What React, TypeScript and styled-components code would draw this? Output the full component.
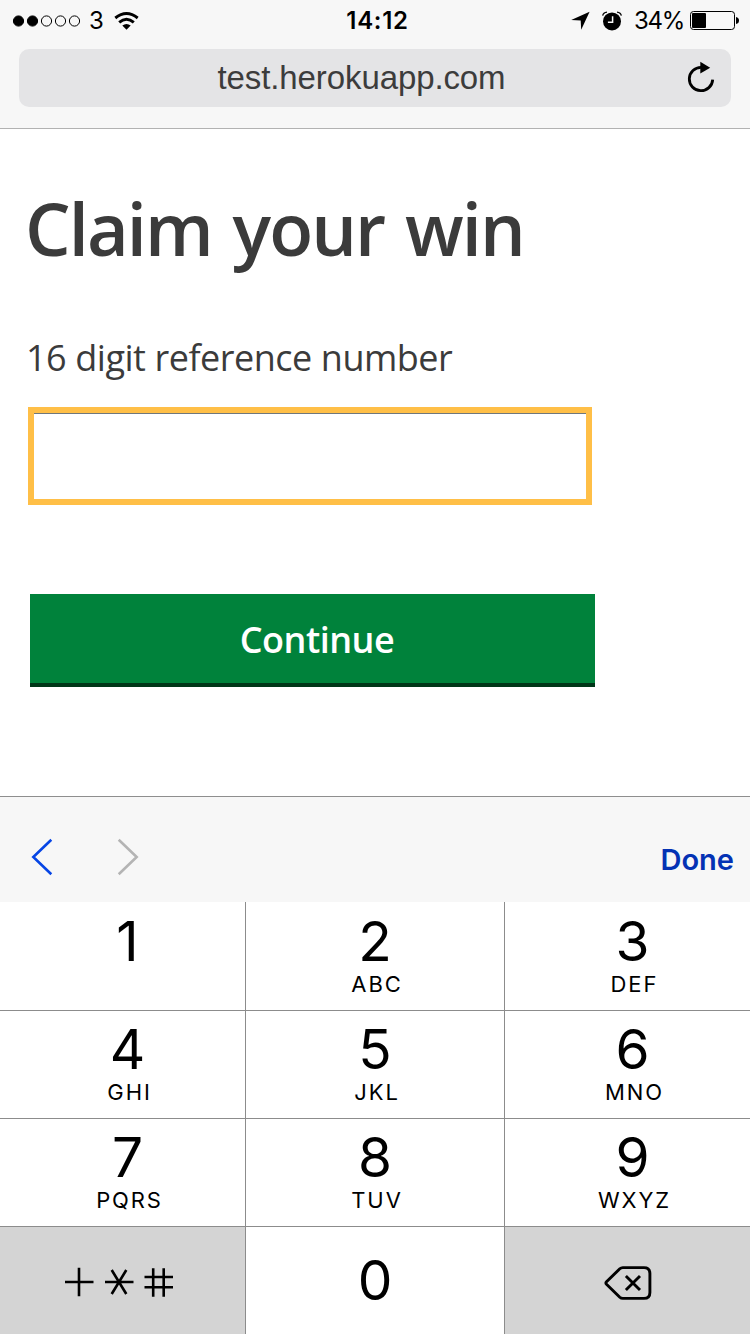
import React from "react";
import styled, { createGlobalStyle } from "styled-components";

const GlobalStyle = createGlobalStyle`
  *, *::before, *::after { box-sizing: border-box; }
  body { margin: 0; background: #fff; }
  button, input { font: inherit; border: 0; padding: 0; margin: 0; border-radius: 0; background: none; outline: none; }
`;

const Screen = styled.div`
  display: flex;
  flex-direction: column;
  width: 750px;
  height: 1334px;
  overflow: hidden;
  background: #fff;
  color: #000;
  font-family: Inter, "Liberation Sans", sans-serif;
`;

const BrowserHeader = styled.header`
  height: 129px;
  padding: 0 19px;
  background: #f7f7f7;
  border-bottom: 1px solid #b2b2b2;
`;

const StatusBar = styled.div`
  display: grid;
  grid-template-columns: 1fr auto 1fr;
  align-items: center;
  height: 42px;
  margin: 0 -19px 7px;
  padding: 0 11px 0 12px;
  font-size: 24px;
  line-height: 40px;
`;

const StatusGroup = styled.div<{ $end?: boolean }>`
  display: flex;
  align-items: center;
  justify-content: ${(p) => (p.$end ? "flex-end" : "flex-start")};
  svg { display: block; flex: none; margin-bottom: 1px; }
`;

const Carrier = styled.span`
  margin: 0 10px 0 8px;
`;

const Clock = styled.span`
  padding-left: 4px;
  font-weight: 600;
  font-size: 24px;
  letter-spacing: 0.7px;
`;

const BatteryLevel = styled.span`
  margin: 0 6px 0 12px;
  letter-spacing: -1.3px;
`;

const AlarmSlot = styled.span`
  margin-left: 12px;
`;

const AddressBar = styled.div`
  display: flex;
  align-items: center;
  height: 58px;
  border-radius: 10px;
  background: #e4e4e6;
`;

const Address = styled.span`
  flex: 1;
  padding-left: 17px;
  text-align: center;
  color: #3c3c3c;
  font: 33px/58px "Liberation Sans", Arial, sans-serif;
  letter-spacing: -0.1px;
`;

const ReloadButton = styled.button`
  width: 28px;
  height: 32px;
  margin: 0 16px 2px 0;
  svg { display: block; }
`;

const Page = styled.main`
  display: flex;
  flex-direction: column;
  align-items: flex-start;
  height: 667px;
  padding: 50px 28px 0 26px;
  color: #3b3b3b;
  font-family: "Open Sans", "Noto Sans", sans-serif;
`;

const Title = styled.h1`
  margin: 0 0 0 -1px;
  font-size: 72px;
  line-height: 98px;
  font-weight: 560;
  letter-spacing: -1.9px;
  word-spacing: 4px;
  white-space: nowrap;
`;

const Label = styled.label`
  margin-top: 56px;
  font-size: 36px;
  line-height: 49px;
  letter-spacing: -0.52px;
  word-spacing: 0.4px;
  white-space: nowrap;
`;

const ReferenceInput = styled.input`
  width: 564px;
  height: 98px;
  margin: 25px 0 0 2px;
  border: 6px solid #ffbf47;
  box-shadow: inset 0 1px 0 #6f777b;
  background: #fff;
`;

const SubmitButton = styled.button`
  width: 565px;
  height: 93px;
  margin: 89px 0 0 4px;
  padding: 2px 0 0 9px;
  border-bottom: 4px solid #003618;
  background: #00823b;
  color: #fff;
  font-size: 36px;
  font-weight: 560;
  line-height: 87px;
  letter-spacing: -0.5px;
`;

const Accessory = styled.div`
  display: flex;
  align-items: center;
  height: 106px;
  padding: 14px 16px 0 30px;
  border-top: 1px solid #8e8e8e;
  background: #f7f7f7;
`;

const FieldButton = styled.button<{ $tone: string }>`
  width: 24px;
  height: 38px;
  margin-right: 62px;
  color: ${(p) => p.$tone};
  svg { display: block; }
`;

const DoneButton = styled.button`
  margin-left: auto;
  padding-top: 6px;
  color: #0432b4;
  font-size: 29px;
  font-weight: 600;
  line-height: 38px;
`;

const Keypad = styled.div`
  display: grid;
  grid-template-columns: 245px 258px 245px;
  grid-template-rows: 109px 108px 108px 107px;
  column-gap: 1px;
  background: #8c8c8c;
  flex: none;
`;

const Key = styled.button<{ $top: number; $nudge?: number }>`
  display: flex;
  flex-direction: column;
  align-items: center;
  justify-content: flex-start;
  padding: ${(p) => p.$top}px 0 0 ${(p) => p.$nudge || 0}px;
  border-bottom: 1px solid #8c8c8c;
  background: #fff;
  color: #000;
`;

const BottomKey = styled(Key)<{ $shade?: boolean }>`
  border-bottom: 0;
  background: ${(p) => (p.$shade ? "#d4d4d4" : "#fff")};
  svg { display: block; }
`;

const Digit = styled.span`
  font-size: 55px;
  line-height: 60px;
`;

const Letters = styled.span`
  font-size: 22px;
  line-height: 24px;
  margin-top: 1px;
  padding-left: 4px;
  letter-spacing: 1.9px;
`;

const SymbolsSlot = styled.span`
  padding-right: 7px;
`;

const SignalDots = () => (
  <svg width="69" height="14" viewBox="0 0 69 14" stroke="#000">
    {[0, 1, 2, 3, 4].map((i) => (
      <circle key={i} cx={6.5 + i * 14} cy="7" r="5.1" strokeWidth="1" fill={i < 2 ? "#000" : "none"} />
    ))}
  </svg>
);

const WifiIcon = () => (
  <svg width="25" height="20" viewBox="0 0 25 20">
    <g fill="none" stroke="#000" strokeWidth="2.9">
      <path d="M1.3 7Q12.5 -2 23.7 7" />
      <path d="M5.2 11.4Q12.5 5 19.8 11.4" />
    </g>
    <path d="M12.5 18.8 8.3 14.6Q12.5 11.3 16.7 14.6Z" />
  </svg>
);

const LocationIcon = () => (
  <svg width="19" height="20" viewBox="0 0 19 20">
    <path d="M18.6 .8 .2 8.9 9.7 9.4 10.2 18.8Z" />
  </svg>
);

const AlarmIcon = () => (
  <svg width="20" height="20" viewBox="0 0 20 20">
    <circle cx="10" cy="10.4" r="9" />
    <path d="M.7 4.7Q1.2 1.5 5 1.1M19.3 4.7Q18.8 1.5 15 1.1" fill="none" stroke="#000" strokeWidth="1.3" />
    <path d="M10.6 5.2V11.3H5.9" fill="none" stroke="#f7f7f7" strokeWidth="1.5" />
  </svg>
);

const BatteryIcon = () => (
  <svg width="49" height="19" viewBox="0 0 49 19">
    <rect x=".5" y=".5" width="44" height="18" rx="3" fill="none" stroke="#000" />
    <rect x="2" y="2" width="14" height="15" rx="1" />
    <path d="M46 6Q49 6.5 49 9.5T46 13Z" />
  </svg>
);

const ReloadIcon = () => (
  <svg width="28" height="32" viewBox="0 0 28 32">
    <path d="M14.3 6.3A11.7 11.7 0 1 0 25.7 18.6" fill="none" stroke="#000" strokeWidth="2.8" />
    <path d="M13.3 .8 23.2 6.7 13.3 12.6Z" />
  </svg>
);

const Chevron = ({ d }: { d: string }) => (
  <svg width="24" height="38" viewBox="0 0 24 38" fill="none" stroke="currentColor" strokeWidth="2.6">
    <path d={d} />
  </svg>
);

const SymbolsIcon = () => (
  <svg width="110" height="32" viewBox="0 0 110 32" fill="none" stroke="#000" strokeWidth="2.6">
    <path d="M1 16H29.5M15 1.8V30.3" />
    <path d="M41 16H69.5M47.7 4 62.3 28M62.3 4 47.7 28" />
    <path d="M80.5 11H109M80.5 21.2H109M89.2 2.3V30.7M99.7 2.3V30.7" />
  </svg>
);

const DeleteIcon = () => (
  <svg width="48" height="36" viewBox="0 0 48 36" fill="none" stroke="#000" strokeWidth="2.9" strokeLinejoin="round">
    <path d="M18.8 2.6H40Q45.9 2.6 45.9 8.6V27.4Q45.9 33.4 40 33.4H18.8Q17.1 33.4 15.8 32.2L2.5 19.3Q1.2 18 2.5 16.7L15.8 3.8Q17.1 2.6 18.8 2.6Z" />
    <path d="M21.9 11 36 25M36 11 21.9 25" />
  </svg>
);

const KEYS = [
  ["1", ""], ["2", "ABC"], ["3", "DEF"],
  ["4", "GHI"], ["5", "JKL"], ["6", "MNO"],
  ["7", "PQRS"], ["8", "TUV"], ["9", "WXYZ"],
];

const NUDGES = [10, 0, 10];

export default function App() {
  return (
    <Screen>
      <GlobalStyle />
      <BrowserHeader>
        <StatusBar>
          <StatusGroup>
            <SignalDots />
            <Carrier>3</Carrier>
            <WifiIcon />
          </StatusGroup>
          <Clock>14:12</Clock>
          <StatusGroup $end>
            <LocationIcon />
            <AlarmSlot><AlarmIcon /></AlarmSlot>
            <BatteryLevel>34%</BatteryLevel>
            <BatteryIcon />
          </StatusGroup>
        </StatusBar>
        <AddressBar>
          <Address>test.herokuapp.com</Address>
          <ReloadButton aria-label="Reload"><ReloadIcon /></ReloadButton>
        </AddressBar>
      </BrowserHeader>
      <Page>
        <Title>Claim your win</Title>
        <Label htmlFor="reference">16 digit reference number</Label>
        <ReferenceInput id="reference" type="text" inputMode="numeric" />
        <SubmitButton>Continue</SubmitButton>
      </Page>
      <Accessory>
        <FieldButton $tone="#0645e5" aria-label="Previous field"><Chevron d="M21.3 1.7 3.3 19 21.3 36.3" /></FieldButton>
        <FieldButton $tone="#b4b4b4" aria-label="Next field"><Chevron d="M2.7 1.7 20.7 19 2.7 36.3" /></FieldButton>
        <DoneButton>Done</DoneButton>
      </Accessory>
      <Keypad>
        {KEYS.map(([digit, letters], i) => (
          <Key key={digit} $top={i < 3 ? 9 : 8} $nudge={NUDGES[i % 3]}>
            <Digit>{digit}</Digit>
            {letters && <Letters>{letters}</Letters>}
          </Key>
        ))}
        <BottomKey $shade $top={39} aria-label="Symbols"><SymbolsSlot><SymbolsIcon /></SymbolsSlot></BottomKey>
        <BottomKey $top={23}><Digit>0</Digit></BottomKey>
        <BottomKey $shade $top={38} aria-label="Delete"><DeleteIcon /></BottomKey>
      </Keypad>
    </Screen>
  );
}
